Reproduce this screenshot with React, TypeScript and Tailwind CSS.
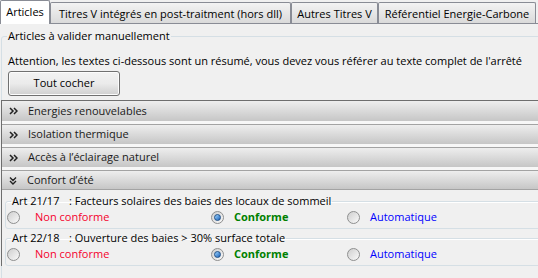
import React, { useState } from "react";

type Tab = { label: string; width: string };

const tabs: Tab[] = [
  { label: "Articles", width: "w-[50px]" },
  { label: "Titres V intégrés en post-traitment (hors dll)", width: "w-[241px]" },
  { label: "Autres Titres V", width: "w-[87px]" },
  { label: "Référentiel Energie-Carbone", width: "w-[158px]" },
];

const sections = [
  { label: "Energies renouvelables", open: false },
  { label: "Isolation thermique", open: false },
  { label: "Accès à l’éclairage naturel", open: false },
  { label: "Confort d’été", open: true },
];

type Article = { code: string; title: string; value: "non" | "conf" | "auto" };

const articles: Article[] = [
  { code: "Art 21/17", title: ": Facteurs solaires des baies des locaux de sommeil", value: "conf" },
  { code: "Art 22/18", title: ": Ouverture des baies > 30% surface totale", value: "conf" },
];

const Chevrons = ({ open }: { open: boolean }) =>
  open ? (
    <svg width="8" height="9" viewBox="0 0 8 9" className="shrink-0">
      <path d="M1 1.5 L4 4.5 L7 1.5 M1 5 L4 8 L7 5" fill="none" stroke="#222" strokeWidth="1.4" />
    </svg>
  ) : (
    <svg width="9" height="8" viewBox="0 0 9 8" className="shrink-0">
      <path d="M1 1 L4 4 L1 7 M5 1 L8 4 L5 7" fill="none" stroke="#222" strokeWidth="1.5" />
    </svg>
  );

const Radio = ({ checked }: { checked: boolean }) => (
  <span className="w-[13px] h-[13px] rounded-full border border-[#8e8f8f] bg-gradient-to-br from-[#cfcfcf] to-[#fafafa] flex items-center justify-center shrink-0">
    {checked && (
      <span className="w-[7px] h-[7px] rounded-full border border-[#1d4e86] bg-gradient-to-br from-[#9fd6ff] to-[#1661b8]" />
    )}
  </span>
);

const ArticleBox = ({ article }: { article: Article }) => {
  const [value, setValue] = useState(article.value);
  return (
    <fieldset className="ml-[3px] w-[560px] h-[35px] border border-[#d5dfe5] rounded-[3px] shadow-[inset_0_1px_0_#fff]">
      <legend className="ml-[5px] px-[1px] h-[14px] leading-[14px] flex text-black">
        <span className="w-[57px]">{article.code}</span>
        <span>{article.title}</span>
      </legend>
      <div className="h-[18px] flex items-center">
        <button onClick={() => setValue("non")} className="flex items-center w-[205px] pl-[1px]">
          <Radio checked={value === "non"} />
          <span className="ml-[15px] text-[#f5002d]">Non conforme</span>
        </button>
        <button onClick={() => setValue("conf")} className="flex items-center w-[136px]">
          <Radio checked={value === "conf"} />
          <span className="ml-[10px] font-bold text-[#008000]">Conforme</span>
        </button>
        <button onClick={() => setValue("auto")} className="flex items-center">
          <Radio checked={value === "auto"} />
          <span className="ml-[10px] text-[#0000ff]">Automatique</span>
        </button>
      </div>
    </fieldset>
  );
};

export default function App() {
  const [active, setActive] = useState(0);
  return (
    <div className="w-[538px] h-[278px] overflow-hidden bg-[#f0f0f0] text-[11px] text-black font-['Open_Sans',sans-serif]">
      {/* -------- tabs ------ */}
      <div className="h-[24px] flex items-end border-b border-[#898c95]">
        {tabs.map((tab, index) =>
          index === active ? (
            <button
              key={index}
              onClick={() => setActive(index)}
              className={`${tab.width} h-[24px] -mb-[1px] relative z-10 bg-white border border-b-0 border-[#898c95] rounded-t-[2px] flex items-center justify-center shrink-0`}
            >
              {tab.label}
            </button>
          ) : (
            <button
              key={index}
              onClick={() => setActive(index)}
              className={`${tab.width} h-[21px] pt-[2px] bg-gradient-to-b from-[#f3f3f3] to-[#dadada] border border-b-0 border-[#898c95] rounded-t-[2px] flex items-center justify-center shrink-0 whitespace-nowrap`}
            >
              {tab.label}
            </button>
          )
        )}
      </div>

      {/* -------- group box ------ */}
      <fieldset className="mt-[5px] ml-[1px] w-[560px] h-[300px] border border-[#d5dfe5] rounded-[3px]">
        <legend className="ml-[5px] px-[1px] h-[14px] leading-[14px]">Articles à valider manuellement</legend>
        <p className="mt-[11px] ml-[6px] h-[14px] leading-[14px]">
          Attention, les textes ci-dessous sont un résumé, vous devez vous référer au texte complet de l'arrêté
        </p>
        <button className="mt-[3px] ml-[6px] w-[112px] h-[25px] rounded-[3px] border border-[#707070] bg-gradient-to-b from-[#f2f2f2] via-[#ebebeb] to-[#cfcfcf] shadow-[inset_0_0_0_1px_#fcfcfc]">
          Tout cocher
        </button>

        {/* -------- accordion ------ */}
        <div className="mt-[4px] -ml-[1px] border-t border-l border-[#6e6e6e]">
          {sections.map((section, index) => (
            <div key={index}>
              <div
                className={`h-[20px] flex items-center gap-[10px] pl-[7px] bg-gradient-to-b from-[#eeeeee] to-[#c6c6c6] text-[#1a1a1a] ${
                  index > 0 ? "border-t border-[#a3a3a3]" : ""
                } ${section.open ? "border-b border-[#9a9a9a]" : ""}`}
              >
                <Chevrons open={section.open} />
                <span>{section.label}</span>
              </div>
              {!section.open && <div className="h-[3px] bg-[#f7f7f7]" />}
              {section.open && (
                <div className="pt-[4px] flex flex-col gap-[2px]">
                  {articles.map((article) => (
                    <ArticleBox key={article.code} article={article} />
                  ))}
                </div>
              )}
            </div>
          ))}
        </div>
      </fieldset>
    </div>
  );
}
